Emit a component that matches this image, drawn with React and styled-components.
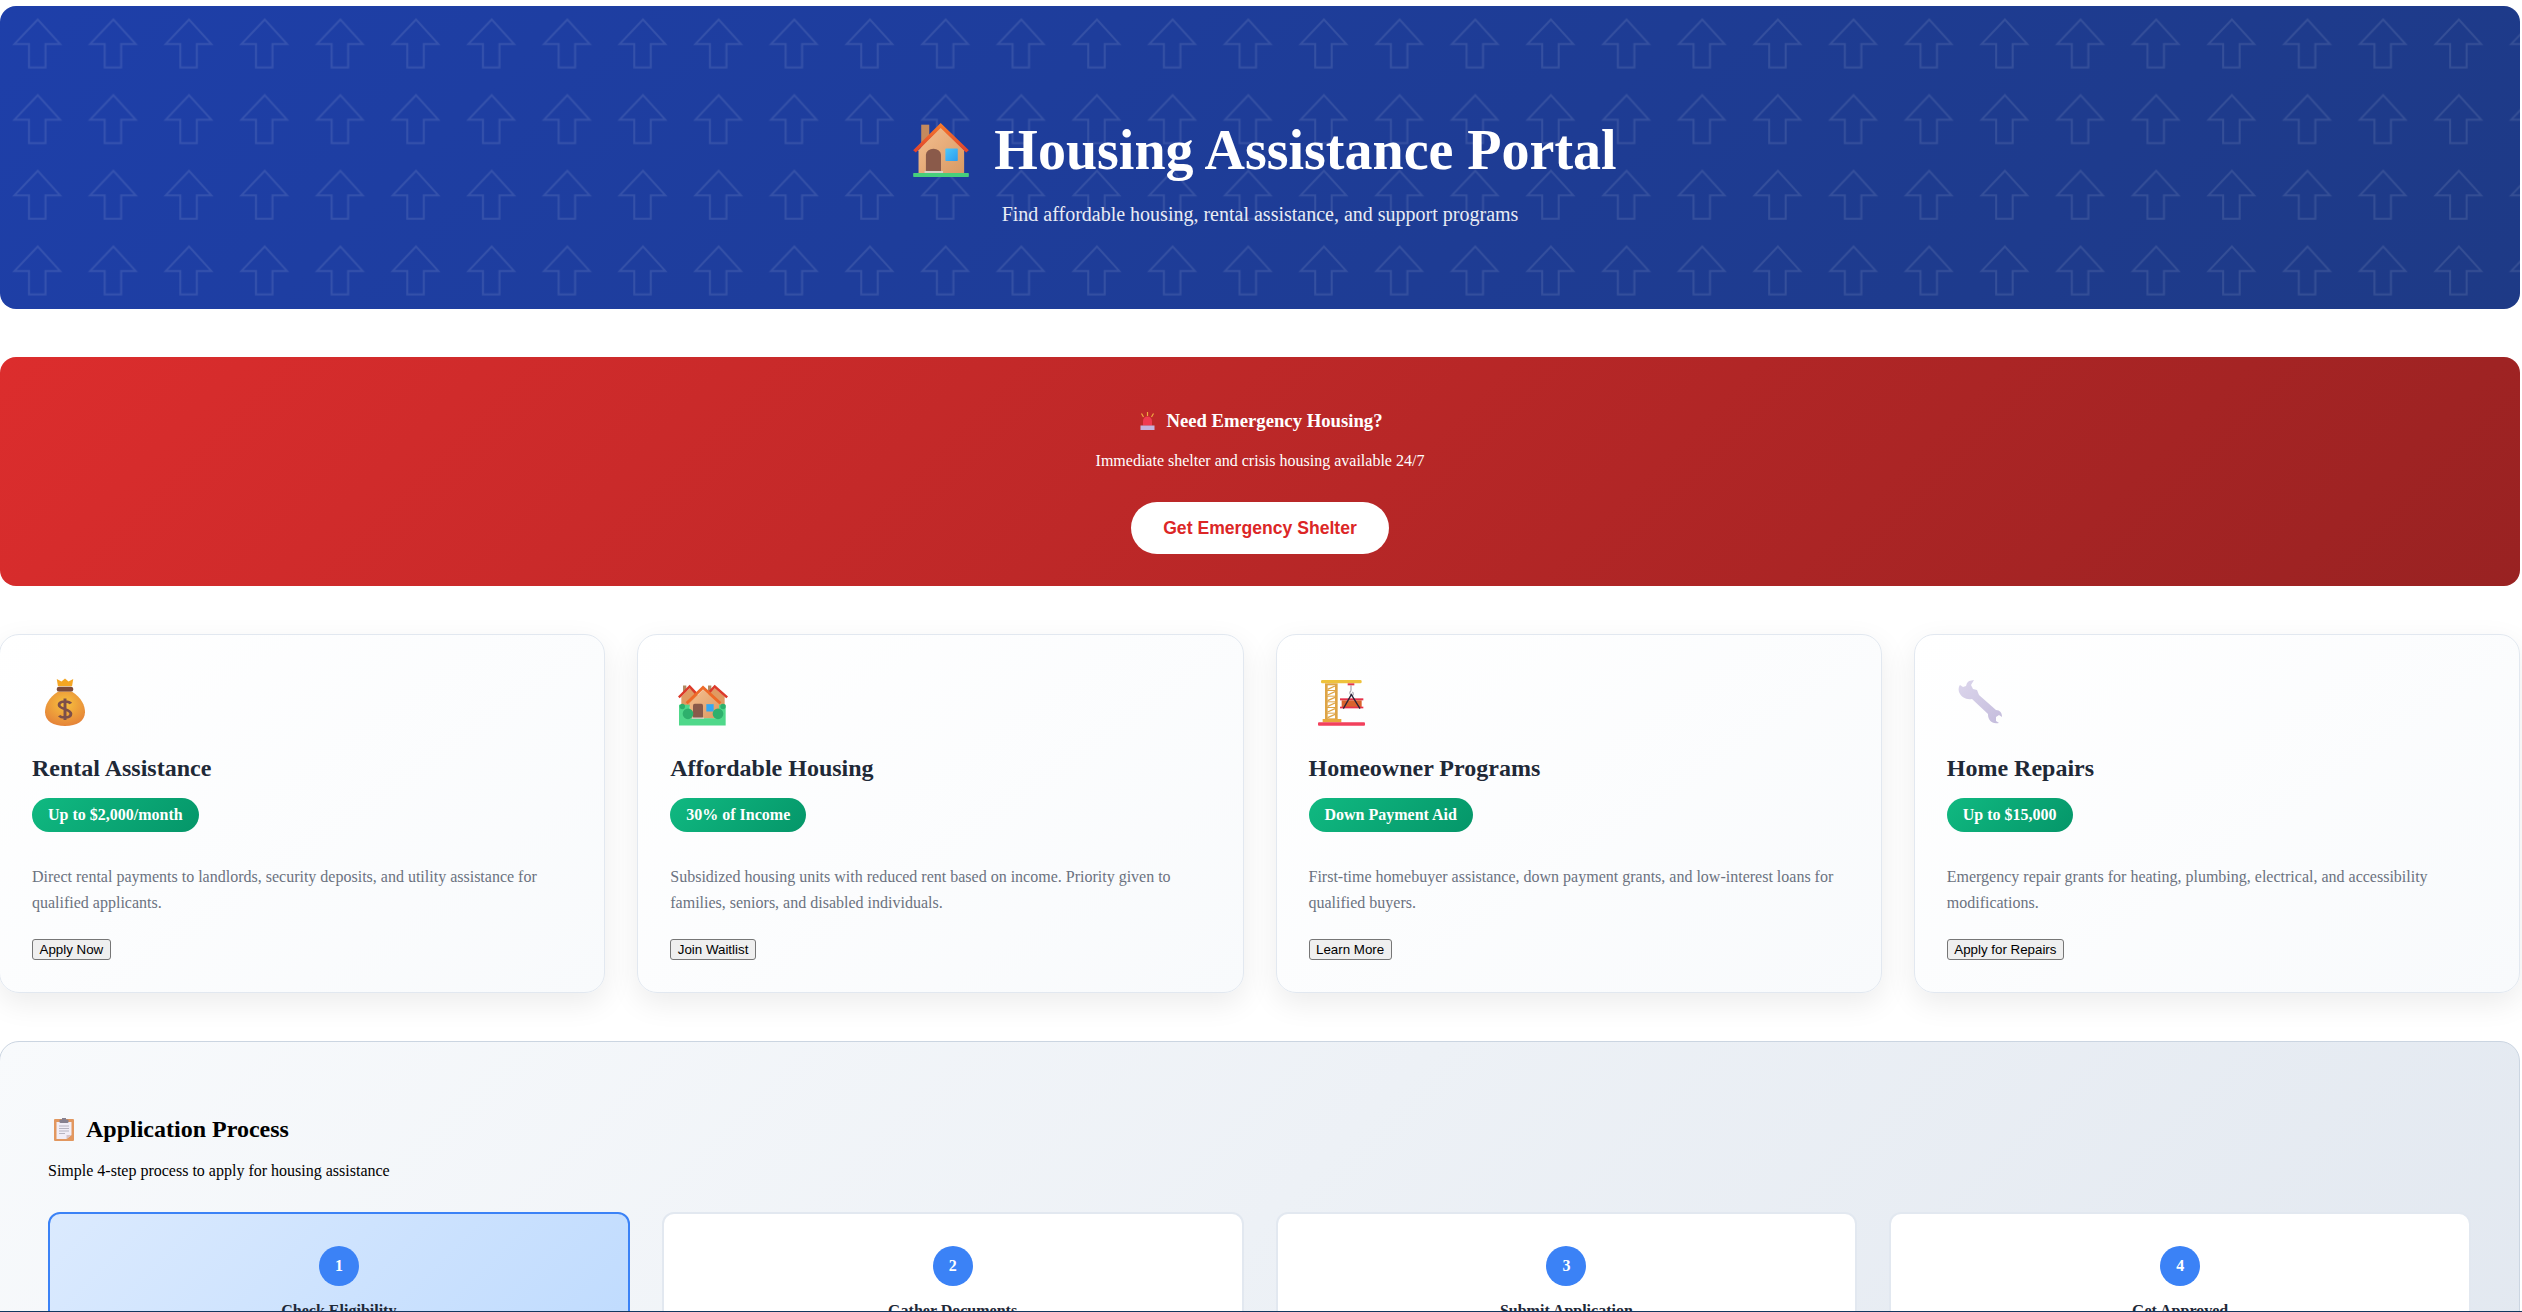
import React from 'react';
import styled, { createGlobalStyle } from 'styled-components';

const Global = createGlobalStyle`
    html, body {
        margin: 0;
        height: 100vh;
        overflow: hidden;
        background: #fff;
    }
    body {
        font-family: "Liberation Serif", "Times New Roman", serif;
        color: #000;
    }
    * { box-sizing: border-box; }
`
const Page = styled.div`
    width: 2521px;
    margin-left: -1px;
    padding-top: 6px;
    display: flex;
    flex-direction: column;
    gap: 48px;
`
const Hero = styled.header`
    position: relative;
    height: 303px;
    margin-left: 1px;
    padding-top: 112px;
    border-radius: 16px;
    overflow: hidden;
    color: #fff;
    background: linear-gradient(135deg, #1e3fa9, #1e3a86);
    display: flex;
    flex-direction: column;
    align-items: center;
`
const HeroPattern = styled.svg`
    position: absolute;
    inset: 0;
    width: 100%;
    height: 100%;
`
const HeroTitle = styled.h1`
    position: relative;
    margin: 0 0 21px;
    font-size: 56px;
    font-weight: 700;
    line-height: 64px;
    display: flex;
    align-items: center;
    gap: 25px;
`
const HouseWrap = styled.span`
    display: flex;
    margin-left: 10px;
`
const HeroSub = styled.p`
    position: relative;
    margin: 0;
    font-size: 20px;
    opacity: 0.9;
`
const Banner = styled.section`
    margin-left: 1px;
    padding: 53px 32px 32px;
    border-radius: 16px;
    color: #fff;
    text-align: center;
    background: linear-gradient(135deg, #dc2d2d, #992222);
    display: flex;
    flex-direction: column;
    align-items: center;
`
const BannerTitle = styled.h3`
    margin: 0 0 21px;
    padding-left: 3px;
    font-size: 18.72px;
    font-weight: 700;
    line-height: 21px;
    display: flex;
    align-items: center;
    gap: 11px;
`
const BannerText = styled.p`
    margin: 0 0 32px;
    font-size: 16px;
    line-height: 18px;
`
const ShelterButton = styled.button`
    border: 0;
    padding: 16px 32px;
    height: 52px;
    border-radius: 26px;
    background: #fff;
    color: #dc2626;
    font-family: "Liberation Sans", Arial, sans-serif;
    font-size: 17.6px;
    font-weight: 700;
`
const Cards = styled.div`
    display: grid;
    grid-template-columns: repeat(4, 1fr);
    gap: 32px;
`
const Card = styled.article`
    padding: 32px;
    border: 1px solid #e2e8f0;
    border-radius: 20px;
    background: linear-gradient(145deg, #ffffff, #f8fafc);
    box-shadow: 0 10px 30px rgba(0, 0, 0, 0.08);
`
const CardIcon = styled.div`
    width: 66px;
    height: 59px;
    margin-bottom: 28px;
    display: flex;
    align-items: flex-end;
    justify-content: center;
`
const CardTitle = styled.h3`
    margin: 0 0 16px;
    font-size: 24px;
    font-weight: 700;
    line-height: 28px;
    color: #1f2937;
`
const Badge = styled.span`
    display: block;
    width: fit-content;
    padding: 8px 16px;
    border-radius: 20px;
    font-size: 16px;
    font-weight: 700;
    line-height: 18px;
    color: #fff;
    background: linear-gradient(135deg, #10b981, #059669);
`
const CardText = styled.p`
    margin: 32px 0 24px;
    font-size: 16px;
    line-height: 25.6px;
    color: #6b7280;
`
const PlainButton = styled.button`
    display: block;
    height: 21px;
    padding: 1px 6.5px;
    border: 1px solid #767676;
    border-radius: 3px;
    background: #efefef;
    color: #000;
    font-family: "Liberation Sans", Arial, sans-serif;
    font-size: 13.333px;
`
const Process = styled.section`
    padding: 73px 48px 48px;
    border: 1px solid #cbd5e1;
    border-radius: 20px;
    background: linear-gradient(135deg, #f8fafc, #e2e8f0);
`
const ProcessTitle = styled.h2`
    margin: 0 0 19px;
    padding-left: 6px;
    font-size: 24px;
    font-weight: 700;
    line-height: 28px;
    display: flex;
    align-items: center;
    gap: 12px;
`
const ProcessText = styled.p`
    margin: 0 0 32px;
    font-size: 16px;
    line-height: 18px;
`
const Steps = styled.div`
    display: grid;
    grid-template-columns: repeat(4, 1fr);
    gap: 32px;
`
const Step = styled.div`
    padding: 32px;
    border: 2px solid ${props => props.$active ? '#3b82f6' : '#e2e8f0'};
    border-radius: 12px;
    text-align: center;
    background: ${props => props.$active ? 'linear-gradient(135deg, #dbeafe, #bfdbfe)' : '#fff'};
`
const StepNumber = styled.div`
    width: 40px;
    height: 40px;
    margin: 0 auto 16px;
    border-radius: 50%;
    background: #3b82f6;
    color: #fff;
    font-weight: 700;
    font-size: 16px;
    display: flex;
    align-items: center;
    justify-content: center;
`
const StepTitle = styled.h4`
    margin: 0;
    font-size: 16px;
    font-weight: 700;
    line-height: 18px;
    color: #1f2937;
`
const BottomLine = styled.div`
    position: fixed;
    left: 0;
    right: 0;
    bottom: 0;
    height: 1px;
    background: #12385f;
`

const HousePic = () => (
    <svg width="56" height="54" viewBox="42 37 166 161">
        <defs>
            <linearGradient id="wall" x1="0" y1="0" x2="1" y2="1">
                <stop offset="0" stopColor="#f4bf90" />
                <stop offset="1" stopColor="#d99a64" />
            </linearGradient>
            <linearGradient id="roof" x1="0.5" y1="0" x2="0.5" y2="1">
                <stop offset="0" stopColor="#f77d2c" />
                <stop offset="1" stopColor="#e0402c" />
            </linearGradient>
            <linearGradient id="glass" x1="0" y1="0" x2="1" y2="1">
                <stop offset="0" stopColor="#4cc8fa" />
                <stop offset="1" stopColor="#2c9cf0" />
            </linearGradient>
        </defs>
        <rect x="66" y="42" width="24" height="80" fill="#c48a5e" />
        <path d="M58 186V118L124 48l70 70v68z" fill="url(#wall)" />
        <path d="M42 118 124 37l84 81-8 7-76-73-74 73z" fill="url(#roof)" />
        <path d="M80 183V132a22 18 0 0 1 45 0V183z" fill="#8a5a4a" />
        <rect x="138" y="113" width="37" height="37" rx="2" fill="url(#glass)" />
        <rect x="76" y="180" width="55" height="6" fill="#d8d0c8" />
        <rect x="42" y="186" width="166" height="12" rx="2" fill="#46cf7c" />
    </svg>
)

const SirenPic = () => (
    <svg width="15" height="18" viewBox="0 0 15 18">
        <path d="M7.500 0v4M1.500 1.500 3.500 5M13.500 1.500 11.500 5" stroke="#f0a742" strokeWidth="1.200" />
        <path d="M3 13.500V9a4.500 4.500 0 0 1 9 0v4.500z" fill="#f03a50" />
        <rect x="0.500" y="13.500" width="14" height="4.500" fill="#c4b3dc" />
    </svg>
)

const MoneyBag = () => (
    <svg width="40" height="48" viewBox="7 1 34 49" preserveAspectRatio="none">
        <defs>
            <radialGradient id="bag" cx="0.5" cy="0.35" r="0.75">
                <stop offset="0" stopColor="#f8c23d" />
                <stop offset="1" stopColor="#e27a38" />
            </radialGradient>
        </defs>
        <path d="M17 2l4 2.500 3-3 3 3 4-2.500-1 7.500H18z" fill="#f5a623" />
        <rect x="17" y="10" width="14" height="5" rx="2" fill="#7c4a3a" />
        <path d="M18 15h12c8 6 11 14 11 21 0 9-7 14-17 14S7 45 7 36c0-7 3-15 11-21z" fill="url(#bag)" />
        <path d="M29 27c-2-3-10-3-10 1.500s10 4 10 9-8 4.500-10 2M24 22v22" fill="none" stroke="#7c4f4a" strokeWidth="2.500" />
    </svg>
)

const Houses = () => (
    <svg width="50" height="42" viewBox="55 43 150 125">
        <defs>
            <linearGradient id="walls" x1="0" y1="0" x2="1" y2="1">
                <stop offset="0" stopColor="#f4bf90" />
                <stop offset="1" stopColor="#dd9a62" />
            </linearGradient>
        </defs>
        <rect x="70" y="47" width="10" height="20" fill="#b08a62" />
        <rect x="145" y="47" width="10" height="20" fill="#b08a62" />
        <path d="M65 110V80L90 55l30 25v30zM140 110V80l25-25 30 25v30z" fill="#e09a62" />
        <path d="M55 80 90 45l22 23-6 5-16-18-30 30zM205 80 165 45l-22 23 6 5 16-18 35 30z" fill="#dc3a2a" />
        <path d="M90 146V100l40-40 48 40v46z" fill="url(#walls)" />
        <path d="M78 97l52-50 55 50-6 6-49-44-46 44z" fill="#ee6a28" />
        <rect x="100" y="102" width="30" height="44" rx="5" fill="#8a5a4a" />
        <rect x="140" y="103" width="22" height="22" fill="#33a8f2" />
        <path d="M58 105H90V145H178V105H198V167H58z" fill="#4fd88a" />
        <rect x="97" y="143" width="36" height="4" fill="#d8d0c8" />
        <circle cx="85" cy="132" r="16" fill="#2eb06c" />
        <circle cx="68" cy="110" r="8" fill="#2eb06c" />
        <circle cx="175" cy="132" r="16" fill="#2eb06c" />
        <circle cx="190" cy="110" r="8" fill="#2eb06c" />
    </svg>
)

const Crane = () => (
    <svg width="47" height="46" viewBox="24 30 141 138">
        <rect x="33" y="30" width="122" height="10" rx="4" fill="#eec23c" />
        <rect x="45" y="40" width="38" height="108" fill="#dea445" />
        {[46, 63, 80, 97, 114, 131].map(y => (
            <g key={y}>
                <rect x="53" y={y} width="22" height="14" fill="#fff" />
                <path d={`M53 ${y + 12}L75 ${y + 2}`} stroke="#dea445" strokeWidth="4" />
            </g>
        ))}
        <rect x="38" y="147" width="56" height="10" fill="#e8a83c" />
        <rect x="24" y="157" width="141" height="10" rx="3" fill="#f2405c" />
        <rect x="113" y="40" width="20" height="6" fill="#e53a4a" />
        <path d="M123 46V62M123 62c-6 4-4 12 2 14s6-8 2-10" fill="none" stroke="#a4a0aa" strokeWidth="3.500" />
        <rect x="90" y="85" width="70" height="6" fill="#e6324a" />
        <rect x="95" y="91" width="60" height="20" fill="#d9632e" />
        <rect x="90" y="110" width="70" height="5" fill="#e6324a" />
        <path d="M100 116 124 74l26 42" fill="none" stroke="#2a2438" strokeWidth="4" />
    </svg>
)

const Wrench = () => (
    <svg width="44" height="46" viewBox="0 0 44 46">
        <defs>
            <linearGradient id="steel" x1="0" y1="0" x2="1" y2="1">
                <stop offset="0" stopColor="#dcd6ec" />
                <stop offset="1" stopColor="#c4bcdc" />
            </linearGradient>
        </defs>
        <path d="M11 1 16 0C15 2 14 3 13 5L15 9 19 10 21 15 38 30C42 30 44 33 44 37L41 35 38 37 38 41 41 43C37 44 33 43 31 39 30 37 30 35 30 34L14 19C8 20 3 17 1 12 0 9 1 6 2 5L5 7 8 6 9 3z" fill="url(#steel)" />
    </svg>
)

const Clipboard = () => (
    <svg width="20" height="23" viewBox="0 0 20 23">
        <rect x="0" y="1" width="20" height="22" rx="1" fill="#e2975f" />
        <path d="M2.500 4h15v13l-5 4h-10z" fill="#f1edf6" />
        <path d="M17.500 17l-5 4v-4z" fill="#d8c4c8" />
        <rect x="5.500" y="1.500" width="9" height="3.500" rx="1" fill="#86808f" />
        <rect x="8" y="0" width="4" height="2" fill="#86808f" />
        <path d="M5 8h10M5 10.500h10M5 13h10M5 15.500h6" stroke="#a8a4b4" strokeWidth="0.800" />
    </svg>
)

const cards = [
    { icon: <MoneyBag />, title: 'Rental Assistance', badge: 'Up to $2,000/month', text: 'Direct rental payments to landlords, security deposits, and utility assistance for qualified applicants.', action: 'Apply Now' },
    { icon: <Houses />, title: 'Affordable Housing', badge: '30% of Income', text: 'Subsidized housing units with reduced rent based on income. Priority given to families, seniors, and disabled individuals.', action: 'Join Waitlist' },
    { icon: <Crane />, title: 'Homeowner Programs', badge: 'Down Payment Aid', text: 'First-time homebuyer assistance, down payment grants, and low-interest loans for qualified buyers.', action: 'Learn More' },
    { icon: <Wrench />, title: 'Home Repairs', badge: 'Up to $15,000', text: 'Emergency repair grants for heating, plumbing, electrical, and accessibility modifications.', action: 'Apply for Repairs' },
];

const steps = ['Check Eligibility', 'Gather Documents', 'Submit Application', 'Get Approved'];

const App = () => (
    <Page>
        <Global />
        <Hero>
            <HeroPattern aria-hidden="true">
                <defs>
                    <pattern id="arrows" width="75.66" height="75.66" patternUnits="userSpaceOnUse" y="-2">
                        <path d="M37.800 15.500 60 40H45.500V63.500H29V40H14.500z" fill="none" stroke="#fff" strokeOpacity="0.1" strokeWidth="2" />
                    </pattern>
                </defs>
                <rect width="100%" height="100%" fill="url(#arrows)" />
            </HeroPattern>
            <HeroTitle><HouseWrap><HousePic /></HouseWrap>Housing Assistance Portal</HeroTitle>
            <HeroSub>Find affordable housing, rental assistance, and support programs</HeroSub>
        </Hero>
        <Banner>
            <BannerTitle><SirenPic />Need Emergency Housing?</BannerTitle>
            <BannerText>Immediate shelter and crisis housing available 24/7</BannerText>
            <ShelterButton>Get Emergency Shelter</ShelterButton>
        </Banner>
        <Cards>
            {cards.map(c => (
                <Card key={c.title}>
                    <CardIcon>{c.icon}</CardIcon>
                    <CardTitle>{c.title}</CardTitle>
                    <Badge>{c.badge}</Badge>
                    <CardText>{c.text}</CardText>
                    <PlainButton>{c.action}</PlainButton>
                </Card>
            ))}
        </Cards>
        <Process>
            <ProcessTitle><Clipboard />Application Process</ProcessTitle>
            <ProcessText>Simple 4-step process to apply for housing assistance</ProcessText>
            <Steps>
                {steps.map((s, i) => (
                    <Step key={s} $active={i === 0}>
                        <StepNumber>{i + 1}</StepNumber>
                        <StepTitle>{s}</StepTitle>
                    </Step>
                ))}
            </Steps>
        </Process>
        <BottomLine />
    </Page>
);

export default App;
